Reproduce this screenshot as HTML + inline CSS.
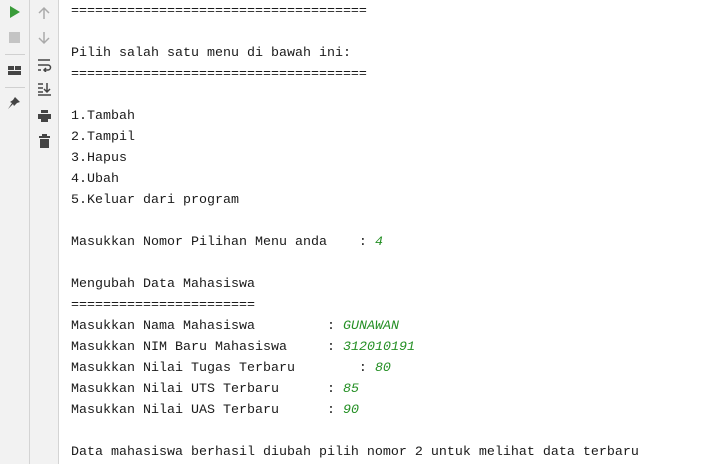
<!DOCTYPE html>
<html><head><style>
body{margin:0;width:711px;height:464px;overflow:hidden;background:#fff;position:relative;font-family:"Liberation Mono",monospace}
.g1{position:absolute;left:0;top:0;width:29px;height:464px;background:#f2f2f2;border-right:1px solid #d4d4d4}
.g2{position:absolute;left:30px;top:0;width:28px;height:464px;background:#f2f2f2;border-right:1px solid #d4d4d4}
pre{position:absolute;left:71px;top:1px;margin:0;font-family:"Liberation Mono",monospace;font-size:13.33px;line-height:21px;color:#1a1a1a}
i{color:#248f24}
.sep{position:absolute;left:5px;width:20px;height:1px;background:#d0d0d0}
svg{position:absolute}
</style></head><body>
<div class="g1"></div><div class="g2"></div>
<svg style="left:9px;top:5px" width="12" height="14"><path d="M1 1L11 7L1 13Z" fill="#3a9c3a"/></svg>
<div style="position:absolute;left:9px;top:32px;width:11px;height:11px;background:#c4c4c4"></div>
<div class="sep" style="top:54px"></div>
<div style="position:absolute;left:8px;top:66px;width:6px;height:4px;background:#444"></div>
<div style="position:absolute;left:15px;top:66px;width:6px;height:4px;background:#444"></div>
<div style="position:absolute;left:8px;top:71px;width:13px;height:4px;background:#444"></div>
<div class="sep" style="top:87px"></div>
<svg style="left:7px;top:96px" width="14" height="14"><path d="M8 1L13 6L10 7L7 10L6 8L1 13L5 7L3 6L6 4Z" fill="#444"/></svg>
<svg style="left:37px;top:6px" width="14" height="14"><path d="M7 13V2M2 7L7 2L12 7" stroke="#aaa" stroke-width="1.5" fill="none"/></svg>
<svg style="left:37px;top:31px" width="14" height="14"><path d="M7 1V12M2 7L7 12L12 7" stroke="#aaa" stroke-width="1.5" fill="none"/></svg>
<svg style="left:37px;top:58px" width="15" height="14"><path d="M1 2H13M1 7H11a2.5 2.5 0 0 1 0 5H7M9 10L7 12L9 14M1 12H4" stroke="#444" stroke-width="1.5" fill="none"/></svg>
<svg style="left:37px;top:82px" width="15" height="14"><path d="M1 2H6M1 6H6M1 10H6M1 13H14M10 1V10M7 7L10 10L13 7" stroke="#444" stroke-width="1.5" fill="none"/></svg>
<svg style="left:37px;top:109px" width="15" height="14"><rect x="4" y="1" width="7" height="3" fill="#444"/><rect x="1" y="5" width="13" height="5" fill="#444"/><rect x="4" y="10" width="7" height="3" fill="#444"/></svg>
<svg style="left:38px;top:134px" width="13" height="15"><rect x="1" y="2" width="11" height="2" fill="#444"/><rect x="4" y="0" width="5" height="2" fill="#444"/><rect x="2" y="5" width="9" height="9" fill="#444"/></svg>
<pre>=====================================

Pilih salah satu menu di bawah ini:
=====================================

1.Tambah
2.Tampil
3.Hapus
4.Ubah
5.Keluar dari program

Masukkan Nomor Pilihan Menu anda    : <i>4</i>

Mengubah Data Mahasiswa
=======================
Masukkan Nama Mahasiswa         : <i>GUNAWAN</i>
Masukkan NIM Baru Mahasiswa     : <i>312010191</i>
Masukkan Nilai Tugas Terbaru        : <i>80</i>
Masukkan Nilai UTS Terbaru      : <i>85</i>
Masukkan Nilai UAS Terbaru      : <i>90</i>

Data mahasiswa berhasil diubah pilih nomor 2 untuk melihat data terbaru</pre>
</body></html>
